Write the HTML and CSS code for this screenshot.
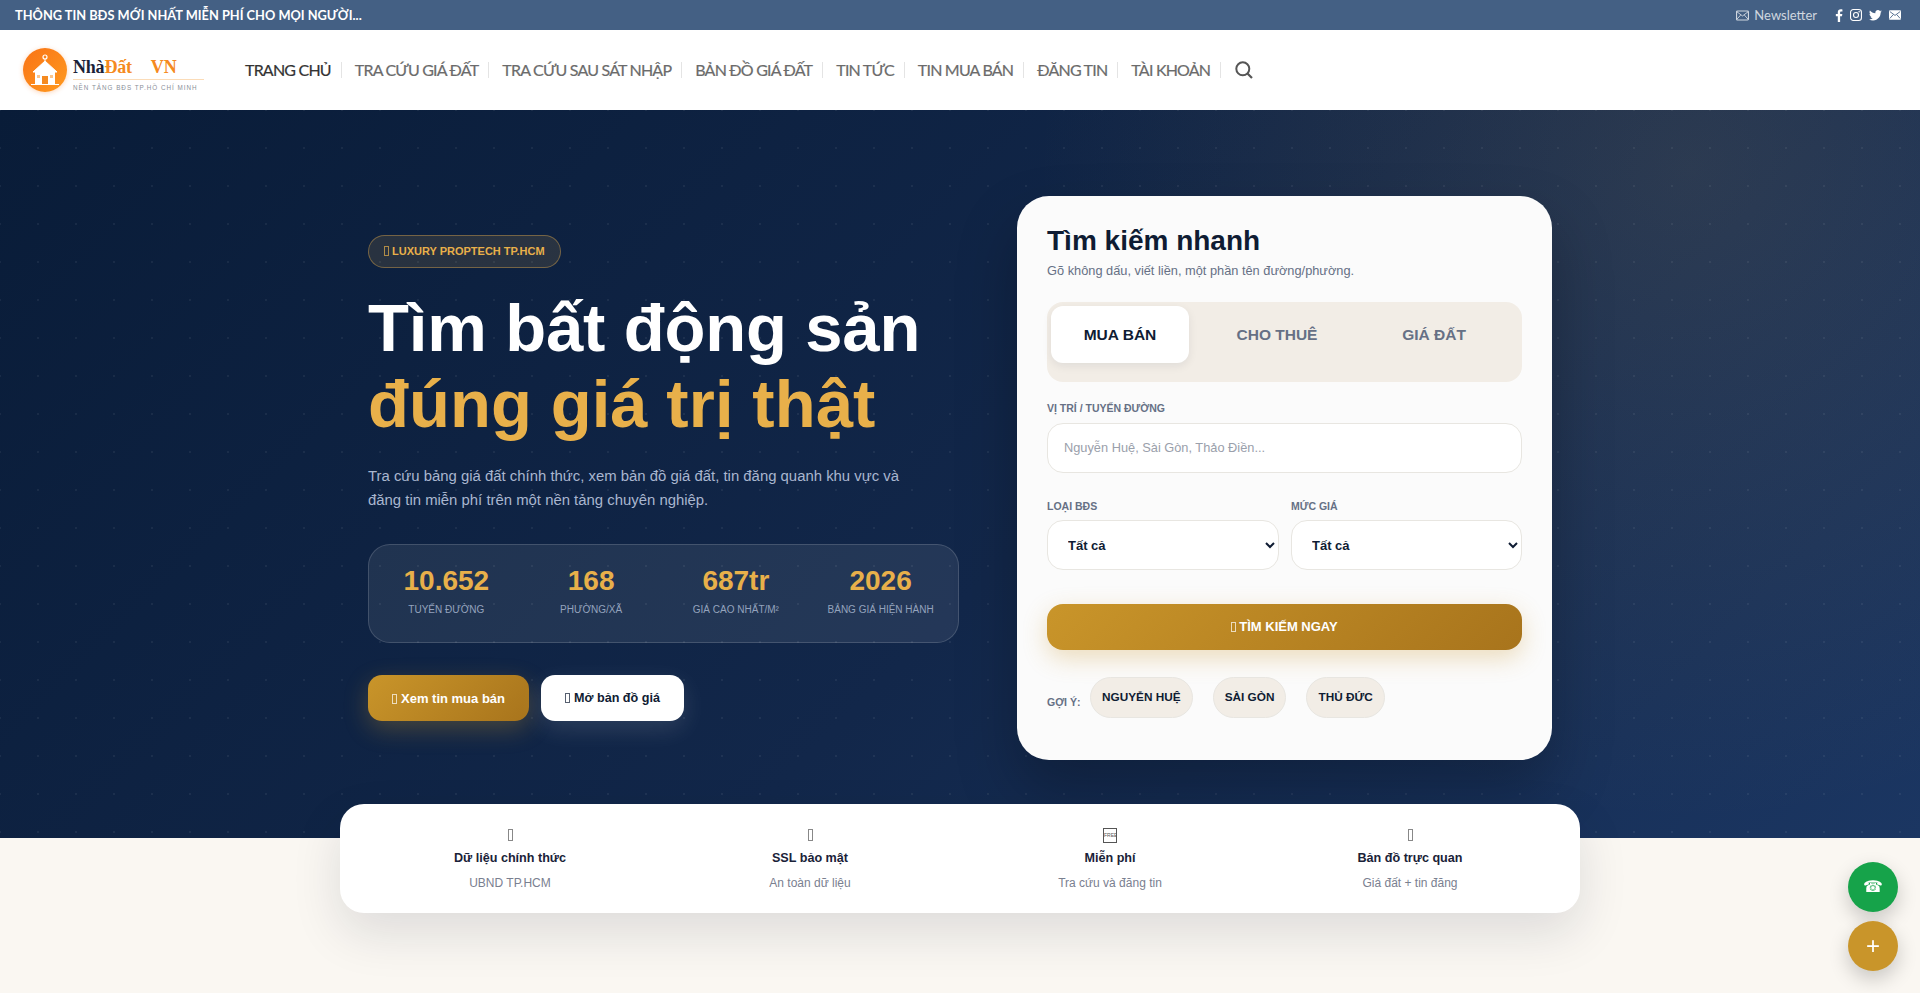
FILE: index.html
```html
<!DOCTYPE html>
<html lang="vi">
  <head>
    <meta charset="UTF-8" />
    <title>NhàĐất VN</title>
    <link rel="stylesheet" href="styles.css">
  </head>
  <body>
    <!-- Top bar -->
    <div class="topbar">
      <span class="topbar-text">THÔNG TIN BĐS MỚI NHẤT MIỄN PHÍ CHO MỌI NGƯỜI...</span>
      <div class="topbar-right">
        <a class="newsletter">
          <svg class="mail-icon" viewBox="0 0 14 11"><rect x="0.6" y="0.6" width="12.8" height="9.8" rx="1" fill="none" stroke="currentColor" stroke-width="1.2"/><path d="M1 1.5 7 6l6-4.5M1 9.5 5 5M13 9.5 9 5" fill="none" stroke="currentColor"/></svg>
          Newsletter
        </a>
        <div class="socials">
          <svg class="social-f" viewBox="0 0 8 14"><path d="M5.2 14V7.8h2l.4-2.4H5.2V3.9c0-.7.3-1.2 1.2-1.2h1.3V.5C7.4.4 6.700.3 5.900.3 4 .3 2.700 1.500 2.700 3.600v1.800H.6v2.400h2.100V14z" fill="#fff"/></svg>
          <svg class="social-i" viewBox="0 0 13 13"><rect x="0.6" y="0.6" width="11.800" height="11.800" rx="3" fill="none" stroke="#fff" stroke-width="1.200"/><circle cx="6.500" cy="6.500" r="2.700" fill="none" stroke="#fff" stroke-width="1.200"/><circle cx="9.900" cy="3.100" r="0.800" fill="#fff"/></svg>
          <svg class="social-t" viewBox="0 0 24 20"><path d="M24 2.400c-.9.400-1.800.7-2.800.8 1-.6 1.800-1.600 2.200-2.700-1 .6-2 1-3.100 1.200C19.300.700 18 0 16.600 0c-2.700 0-4.900 2.200-4.900 4.900 0 .4 0 .8.100 1.100C7.700 5.800 4.100 3.800 1.700.900c-.4.700-.7 1.600-.7 2.500 0 1.700.9 3.200 2.200 4.100-.8 0-1.600-.2-2.200-.6v.1c0 2.400 1.700 4.400 3.900 4.800-.4.100-.8.200-1.300.2-.3 0-.6 0-.9-.1.600 2 2.400 3.400 4.600 3.400-1.700 1.300-3.800 2.100-6.100 2.100-.4 0-.8 0-1.200-.1C2.200 18.200 4.800 19 7.500 19c9.100 0 14-7.500 14-14v-.6c1-.7 1.800-1.600 2.500-2z" fill="#fff"/></svg>
          <svg class="social-m" viewBox="0 0 14 11"><rect width="14" height="11" rx="1.200" fill="#fff"/><path d="M1 1.500 7 6l6-4.500M1 9.500 5 5M13 9.500 9 5" fill="none" stroke="#446084"/></svg>
        </div>
      </div>
    </div>

    <!-- Header -->
    <header class="site-header">
      <a class="logo">
        <span class="logo-circle">
          <svg viewBox="0 0 44 44" class="logo-house">
            <circle cx="22" cy="9" r="2" fill="none" stroke="#fff" stroke-width="1.200"/>
            <path d="M22 11v3M22 13 10 24h24z" fill="#fff" stroke="#fff"/>
            <rect x="12" y="24" width="20" height="12" fill="#fff"/>
            <rect x="8" y="36" width="28" height="1" fill="#fff"/>
            <rect x="19" y="28" width="6" height="8" fill="#f58a20"/>
            <rect x="14" y="27" width="3" height="3" fill="#fbc58c"/>
            <rect x="27" y="27" width="3" height="3" fill="#fbc58c"/>
          </svg>
        </span>
        <span class="logo-words">
          <span class="logo-name">Nhà<span class="logo-accent">Đất</span><span class="logo-vn">VN</span></span>
          <span class="logo-tag">NỀN TẢNG BĐS TP.HỒ CHÍ MINH</span>
        </span>
      </a>
      <nav class="main-nav">
        <a class="nav-item active">TRANG CHỦ</a>
        <a class="nav-item">TRA CỨU GIÁ ĐẤT</a>
        <a class="nav-item">TRA CỨU SAU SÁT NHẬP</a>
        <a class="nav-item">BẢN ĐỒ GIÁ ĐẤT</a>
        <a class="nav-item">TIN TỨC</a>
        <a class="nav-item">TIN MUA BÁN</a>
        <a class="nav-item">ĐĂNG TIN</a>
        <a class="nav-item">TÀI KHOẢN</a>
        <a class="nav-search">
          <svg viewBox="0 0 18 18"><circle cx="7.800" cy="7.800" r="6.500" fill="none" stroke="currentColor" stroke-width="2"/><path d="m12.500 12.500 4.500 4.500" stroke="currentColor" stroke-width="2.200"/></svg>
        </a>
      </nav>
    </header>

    <!-- Hero -->
    <section class="hero">
      <div class="hero-inner">
        <div class="hero-left">
          <span class="hero-badge"><span class="missing-glyph"></span>LUXURY PROPTECH TP.HCM</span>
          <h1>Tìm bất động sản<br /><span class="gold">đúng giá trị thật</span></h1>
          <p class="hero-desc">Tra cứu bảng giá đất chính thức, xem bản đồ giá đất, tin đăng quanh khu vực và đăng tin miễn phí trên một nền tảng chuyên nghiệp.</p>
          <div class="stats">
            <div class="stat"><strong>10.652</strong><span>TUYẾN ĐƯỜNG</span></div>
            <div class="stat"><strong>168</strong><span>PHƯỜNG/XÃ</span></div>
            <div class="stat"><strong>687tr</strong><span>GIÁ CAO NHẤT/M²</span></div>
            <div class="stat"><strong>2026</strong><span>BẢNG GIÁ HIỆN HÀNH</span></div>
          </div>
          <div class="hero-actions">
            <a class="btn btn-gold"><span class="missing-glyph"></span>Xem tin mua bán</a>
            <a class="btn btn-white"><span class="missing-glyph"></span>Mở bản đồ giá</a>
          </div>
        </div>

        <!-- Search card -->
        <div class="search-card">
          <h2>Tìm kiếm nhanh</h2>
          <p class="search-sub">Gõ không dấu, viết liền, một phần tên đường/phường.</p>
          <div class="tabs">
            <button class="tab active">MUA BÁN</button>
            <button class="tab">CHO THUÊ</button>
            <button class="tab">GIÁ ĐẤT</button>
          </div>
          <label class="field-label">VỊ TRÍ / TUYẾN ĐƯỜNG</label>
          <input class="field-input" type="text" placeholder="Nguyễn Huệ, Sài Gòn, Thảo Điền..." />
          <div class="field-row">
            <div>
              <label class="field-label">LOẠI BĐS</label>
              <select class="field-select"><option>Tất cả</option></select>
            </div>
            <div>
              <label class="field-label">MỨC GIÁ</label>
              <select class="field-select"><option>Tất cả</option></select>
            </div>
          </div>
          <button class="search-btn"><span class="missing-glyph"></span>TÌM KIẾM NGAY</button>
          <div class="hints">
            <span class="hints-label">GỢI Ý:</span>
            <a class="pill">NGUYỄN HUỆ</a>
            <a class="pill">SÀI GÒN</a>
            <a class="pill">THỦ ĐỨC</a>
          </div>
        </div>
      </div>
    </section>

    <!-- Feature strip -->
    <section class="features">
      <div class="feature"><i class="feature-icon"><span class="missing-glyph"></span></i><strong>Dữ liệu chính thức</strong><span>UBND TP.HCM</span></div>
      <div class="feature"><i class="feature-icon"><span class="missing-glyph"></span></i><strong>SSL bảo mật</strong><span>An toàn dữ liệu</span></div>
      <div class="feature"><i class="feature-icon"><span class="free-mark">FREE</span></i><strong>Miễn phí</strong><span>Tra cứu và đăng tin</span></div>
      <div class="feature"><i class="feature-icon"><span class="missing-glyph"></span></i><strong>Bản đồ trực quan</strong><span>Giá đất + tin đăng</span></div>
    </section>

    <!-- Floating buttons -->
    <a class="fab fab-call">☎</a>
    <a class="fab fab-plus">+</a>
  </body>
</html>
```

FILE: styles.css
```css
* {
  box-sizing: border-box;
}
body {
  margin: 0;
  font-family: "Liberation Sans", Arial, sans-serif;
  background: #faf7f2;
  color: #0f1c33;
  min-height: 993px;
  overflow-x: hidden;
}

/* Box drawn where the emoji has no glyph */
.missing-glyph {
  display: inline-block;
  width: 5px;
  height: 10px;
  margin-right: 3px;
  border: 1px solid currentColor;
  opacity: 0.7;
  vertical-align: -1px;
}

/* Top bar */
.topbar {
  height: 30px;
  background: #446084;
  color: #fff;
  font-family: Lato, sans-serif;
  display: flex;
  justify-content: space-between;
  align-items: center;
  padding: 0 19px 0 15px;
}
.topbar-text {
  font-size: 12.800px;
  font-weight: 700;
}
.topbar-right {
  display: flex;
  align-items: center;
  gap: 18px;
}
.newsletter {
  display: flex;
  align-items: center;
  gap: 5px;
  font-size: 13px;
  color: rgba(255, 255, 255, 0.75);
}
.mail-icon {
  width: 13px;
  height: 11px;
}
.socials {
  display: flex;
  align-items: center;
  gap: 7px;
}
.social-f {
  width: 8px;
  height: 13px;
}
.social-i {
  width: 12px;
  height: 12px;
}
.social-t {
  width: 13px;
  height: 11px;
}
.social-m {
  width: 12px;
  height: 10px;
}

/* Header */
.site-header {
  height: 80px;
  background: #fff;
  display: flex;
  align-items: center;
  padding-left: 23px;
}
.logo {
  display: flex;
  align-items: center;
  width: 222px;
  gap: 6px;
}
.logo-circle {
  width: 44px;
  height: 44px;
  border-radius: 50%;
  background: linear-gradient(135deg, #f97316, #ff9a1f);
  box-shadow: 0 1px 5px rgba(249, 115, 22, 0.3);
  flex-shrink: 0;
}
.logo-house {
  display: block;
}
.logo-words {
  display: flex;
  flex-direction: column;
  width: 131px;
  margin-top: 7px;
}
.logo-name {
  font-family: "Liberation Serif", serif;
  font-weight: 700;
  font-size: 18px;
  line-height: 20px;
  color: #1a2238;
  border-bottom: 1px solid #fbdcb8;
  padding-bottom: 2px;
  letter-spacing: -0.2px;
}
.logo-accent,
.logo-vn {
  color: #f58a20;
}
.logo-vn {
  margin-left: 19px;
}
.logo-tag {
  font-size: 6.300px;
  letter-spacing: 1px;
  color: #8a8f99;
  margin-top: 4px;
  white-space: nowrap;
}
.main-nav {
  display: flex;
  align-items: center;
  font-family: Lato, sans-serif;
}
.nav-item {
  font-size: 16px;
  font-weight: 400;
  letter-spacing: -0.8px;
  color: #6b6b6b;
  padding: 0 10px 0 13px;
  border-right: 1px solid #e4e4e4;
  line-height: 16px;
  white-space: nowrap;
  -webkit-text-stroke: 0.2px currentColor;
}
.nav-item.active {
  color: #333;
  padding-left: 0;
}
.nav-search {
  color: #555;
  margin-left: 14px;
  display: flex;
}
.nav-search svg {
  width: 18px;
  height: 18px;
}

/* Hero */
.hero {
  background:
    radial-gradient(rgba(255, 255, 255, 0.06) 1px, transparent 1.5px) -19px -19px / 38px 38px,
    radial-gradient(circle at 88% 8%, rgba(180, 150, 90, 0.15), transparent 36%),
    linear-gradient(135deg, #091c38 0%, #12274a 55%, #1b3662 100%);
  padding: 86px 0 78px;
}
.hero-inner {
  width: 1184px;
  margin: 0 auto;
  display: flex;
  justify-content: space-between;
  align-items: center;
}
.hero-left {
  width: 591px;
}
.hero-badge {
  display: inline-block;
  height: 33px;
  line-height: 30px;
  padding: 0 15px;
  border-radius: 17px;
  border: 1px solid rgba(232, 176, 74, 0.4);
  background: rgba(232, 176, 74, 0.13);
  color: #e8b04a;
  font-size: 11px;
  font-weight: 700;
}
.hero-left h1 {
  margin: 22px 0 0;
  font-size: 67px;
  line-height: 76px;
  letter-spacing: -0.15px;
  font-weight: 700;
  color: #fff;
}
.gold {
  color: #e8b04a;
  letter-spacing: 0.07px;
}
.hero-desc {
  margin: 22px 0 0;
  width: 560px;
  font-size: 14.900px;
  line-height: 24px;
  color: #a9b6cf;
}
.stats {
  margin-top: 32px;
  height: 99px;
  padding: 20px 5px 0;
  display: grid;
  grid-template-columns: repeat(4, 1fr);
  background: rgba(255, 255, 255, 0.08);
  border: 1px solid rgba(255, 255, 255, 0.15);
  border-radius: 22px;
}
.stat {
  text-align: center;
}
.stat strong {
  display: block;
  font-size: 28px;
  line-height: 32px;
  color: #e8b04a;
}
.stat span {
  display: block;
  margin-top: 7px;
  font-size: 10px;
  color: #94a3bd;
}
.hero-actions {
  margin-top: 32px;
  display: flex;
  gap: 12px;
}
.btn {
  height: 46px;
  border-radius: 14px;
  font-size: 13px;
  font-weight: 700;
  padding: 0 24px;
}
.btn .missing-glyph {
  margin-right: 4px;
}
.btn-gold {
  line-height: 47px;
  background: linear-gradient(135deg, #c9952a, #a8741c);
  color: #fff;
  box-shadow: 0 8px 24px rgba(201, 149, 42, 0.3);
}
.btn-white {
  background: #fff;
  color: #0f1c33;
  font-size: 12.600px;
  line-height: 46px;
  box-shadow: 0 8px 24px rgba(255, 255, 255, 0.12);
}

/* Search card */
.search-card {
  width: 535px;
  height: 564px;
  padding: 28px 30px;
  background: #fbfbfb;
  border-radius: 32px;
  box-shadow: 0 30px 60px rgba(0, 0, 0, 0.25);
}
.search-card h2 {
  margin: 1px 0 0;
  font-size: 28px;
  line-height: 32px;
  font-weight: 700;
}
.search-sub {
  margin: 6px 0 0;
  font-size: 12.800px;
  line-height: 16px;
  color: #667085;
}
.tabs {
  margin-top: 23px;
  height: 80px;
  padding: 4px;
  display: grid;
  grid-template-columns: repeat(3, 138px);
  grid-auto-rows: 57px;
  column-gap: 19px;
  background: #f2ede6;
  border-radius: 16px;
}
.tab {
  border: 0;
  background: none;
  border-radius: 12px;
  font-family: inherit;
  font-size: 15.500px;
  font-weight: 700;
  color: #667085;
}
.tab.active {
  background: #fff;
  color: #0f1c33;
  box-shadow: 0 3px 10px rgba(15, 28, 51, 0.08);
}
.field-label {
  display: block;
  font-size: 10.500px;
  font-weight: 700;
  line-height: 12px;
  color: #667085;
}
.tabs + .field-label {
  margin-top: 20px;
}
.field-input {
  display: block;
  width: 100%;
  height: 50px;
  margin-top: 9px;
  padding: 0 16px 1px;
  border: 1px solid #e8e6e1;
  border-radius: 16px;
  background: #fff;
  font-family: inherit;
  font-size: 12.800px;
}
.field-input::placeholder {
  color: #9aa0ab;
}
.field-row {
  margin-top: 27px;
  display: grid;
  grid-template-columns: 232px 231px;
  column-gap: 12px;
}
.field-select {
  display: block;
  width: 100%;
  height: 50px;
  margin-top: 8px;
  padding: 0 16px;
  border: 1px solid #e8e6e1;
  border-radius: 16px;
  background: #fff;
  font-family: inherit;
  font-size: 13px;
  font-weight: 700;
  color: #0f1c33;
}
.search-btn {
  display: block;
  width: 100%;
  height: 46px;
  margin-top: 34px;
  padding-bottom: 3px;
  border: 0;
  border-radius: 16px;
  background: linear-gradient(135deg, #c9952a, #a8741c);
  box-shadow: 0 8px 24px rgba(201, 149, 42, 0.3);
  color: #fff;
  font-family: inherit;
  font-size: 13px;
  font-weight: 700;
}
.hints {
  margin-top: 27px;
  display: flex;
  align-items: flex-end;
}
.hints-label {
  font-size: 10.500px;
  font-weight: 700;
  color: #667085;
  width: 43px;
  padding-bottom: 10px;
}
.pill {
  height: 41px;
  line-height: 38px;
  padding: 0 11px;
  margin-right: 20px;
  background: #f2ede6;
  border: 1px solid #e8e6e1;
  border-radius: 21px;
  font-size: 11.800px;
  font-weight: 700;
  color: #0f1c33;
}

/* Feature strip */
.features {
  position: relative;
  width: 1240px;
  height: 109px;
  margin: -34px auto 0;
  padding: 20px 20px 0;
  display: grid;
  grid-template-columns: repeat(4, 1fr);
  background: #fff;
  border-radius: 24px;
  box-shadow: 0 20px 50px rgba(15, 28, 51, 0.12);
}
.feature {
  text-align: center;
}
.feature-icon {
  display: block;
  height: 21px;
  line-height: 21px;
  font-style: normal;
  color: #555;
}
.feature-icon .missing-glyph {
  height: 12px;
  margin: 0;
}
.free-mark {
  display: inline-block;
  width: 14px;
  height: 15px;
  line-height: 13px;
  border: 1px solid #555;
  font-size: 5px;
  overflow: hidden;
  vertical-align: middle;
}
.feature strong {
  display: block;
  margin-top: 4px;
  font-size: 12.600px;
  line-height: 18px;
  color: #1a2238;
}
.feature span:not(.missing-glyph):not(.free-mark) {
  display: block;
  margin-top: 8px;
  font-size: 12px;
  line-height: 16px;
  color: #7a8090;
}

/* Floating buttons */
.fab {
  position: fixed;
  right: 22px;
  width: 50px;
  height: 50px;
  border-radius: 50%;
  color: #fff;
  text-align: center;
  line-height: 50px;
  box-shadow: 0 8px 20px rgba(0, 0, 0, 0.2);
}
.fab-call {
  top: 862px;
  background: #16a34a;
  font-size: 16px;
}
.fab-plus {
  top: 921px;
  background: #c9952a;
  font-size: 24px;
}
```
